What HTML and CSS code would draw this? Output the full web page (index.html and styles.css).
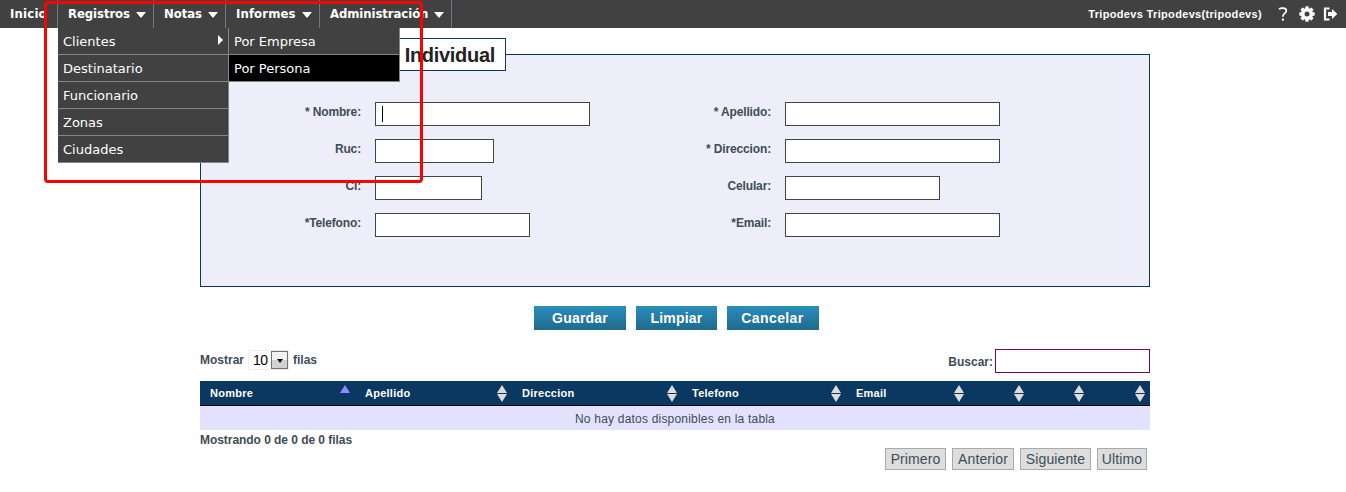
FILE: index.html
```html
<!DOCTYPE html>
<html lang="es">
<head>
<meta charset="utf-8">
<title>Registro de clientes</title>
<link rel="stylesheet" href="styles.css">
</head>
<body>
<header class="topbar">
  <nav class="menu">
    <div class="menu-item inicio"><span>Inicio</span></div>
    <div class="menu-item registros"><span>Registros</span><i class="down"></i>
      <div class="submenu">
        <div class="entry"><span>Clientes</span><i class="right"></i></div>
        <div class="entry">Destinatario</div>
        <div class="entry">Funcionario</div>
        <div class="entry">Zonas</div>
        <div class="entry">Ciudades</div>
      </div>
      <div class="submenu second">
        <div class="entry">Por Empresa</div>
        <div class="entry active">Por Persona</div>
      </div>
    </div>
    <div class="menu-item notas"><span>Notas</span><i class="down"></i></div>
    <div class="menu-item informes"><span>Informes</span><i class="down"></i></div>
    <div class="menu-item admin"><span>Administración</span><i class="down"></i></div>
  </nav>
  <div class="user">
    <span class="user-name">Tripodevs Tripodevs(tripodevs)</span>
    <svg class="icon help" width="12" height="16" viewBox="0 0 12 16"><path d="M2 3.200C3.300 2 9.300 1.200 9.300 4.700C9.300 7.600 5.800 7.200 5.800 10.800" fill="none" stroke="#fff" stroke-width="1.700"/><rect x="4.900" y="12.500" width="2" height="2.200" fill="#fff"/></svg>
    <svg class="icon gear" width="16" height="16" viewBox="0 0 16 16"><g fill="#fff"><rect x="6.300" y="0.300" width="3.400" height="15.400" rx=".6"/><rect x="6.300" y="0.300" width="3.400" height="15.400" rx=".6" transform="rotate(45 8 8)"/><rect x="6.300" y="0.300" width="3.400" height="15.400" rx=".6" transform="rotate(90 8 8)"/><rect x="6.300" y="0.300" width="3.400" height="15.400" rx=".6" transform="rotate(135 8 8)"/><circle cx="8" cy="8" r="6"/></g><circle cx="8" cy="8" r="2.500" fill="#414141"/></svg>
    <svg class="icon exit" width="15" height="14" viewBox="0 0 15 14"><path d="M6.500 1.500H2V12.500H6.500" fill="none" stroke="#fff" stroke-width="2.200"/><path d="M5 5H9V2L14.300 7L9 12V9H5Z" fill="#fff"/></svg>
  </div>
</header>
<div class="mark"></div>
<main class="page">
  <section class="panel">
    <h1 class="legend">Cliente Individual</h1>
    <div class="form">
      <label>* Nombre:</label><div class="field w215"><i class="caret"></i></div>
      <label>* Apellido:</label><div class="field w215"></div>
      <label>Ruc:</label><div class="field w119"></div>
      <label>* Direccion:</label><div class="field w215"></div>
      <label>Ci:</label><div class="field w107"></div>
      <label>Celular:</label><div class="field w155"></div>
      <label>*Telefono:</label><div class="field w155"></div>
      <label>*Email:</label><div class="field w215"></div>
    </div>
  </section>
  <div class="buttons">
    <button class="btn guardar">Guardar</button>
    <button class="btn limpiar">Limpiar</button>
    <button class="btn cancelar">Cancelar</button>
  </div>
  <div class="tools">
    <div class="length"><span>Mostrar</span><div class="select"><span>10</span><i class="drop"></i></div><span>filas</span></div>
    <div class="search"><span>Buscar:</span><div class="search-field"></div></div>
  </div>
  <div class="grid-head">
    <div class="th"><span>Nombre</span><i class="sort asc"></i></div>
    <div class="th"><span>Apellido</span><i class="sort"></i></div>
    <div class="th"><span>Direccion</span><i class="sort"></i></div>
    <div class="th"><span>Telefono</span><i class="sort"></i></div>
    <div class="th"><span>Email</span><i class="sort"></i></div>
    <div class="th"><i class="sort"></i></div>
    <div class="th"><i class="sort"></i></div>
    <div class="th"><i class="sort"></i></div>
  </div>
  <div class="empty"><span>No hay datos disponibles en la tabla</span></div>
  <div class="info"><span>Mostrando 0 de 0 de 0 filas</span></div>
  <div class="pager">
    <span class="pg p1">Primero</span><span class="pg p2">Anterior</span><span class="pg p3">Siguiente</span><span class="pg p4">Ultimo</span>
  </div>
</main>
</body>
</html>
```
FILE: styles.css
```css
* { box-sizing: border-box; }
body { margin: 0; height: 492px; overflow: hidden; background: #fff; font: 12px/14px "Liberation Sans", Arial, sans-serif; color: #3f4c56; }
.topbar { height: 28px; background: #414141; color: #fff; display: flex; justify-content: space-between; }
.menu { display: flex; font: bold 13px/27px "DejaVu Sans Condensed", "DejaVu Sans", sans-serif; letter-spacing: -.08px; }
.menu-item { position: relative; height: 28px; padding: 0 7px 0 10px; border-right: 1px solid #777484; display: flex; justify-content: space-between; align-items: flex-start; white-space: nowrap; }
.inicio { width: 58px; letter-spacing: .2px; }
.registros { width: 96px; }
.notas { width: 72px; }
.informes { width: 94px; letter-spacing: .12px; }
.admin { width: 132px; }
.down { border: 5px solid transparent; border-top: 6px solid #fff; border-bottom: 0; margin-top: 12px; }
.submenu { position: absolute; z-index: 5; left: 0; top: 28px; width: 171px; font: 13px/28px "DejaVu Sans", sans-serif; letter-spacing: 0; }
.submenu.second { left: 171px; }
.entry { height: 27px; padding: 0 5px; background: #414141; border-right: 1px solid #858585; border-bottom: 1px solid #858585; display: flex; justify-content: space-between; align-items: flex-start; }
.entry.active { background: #000; }
.right { border: 5px solid transparent; border-left: 5px solid #fff; border-right: 0; margin-top: 7px; }
.user { display: flex; align-items: center; height: 27px; padding-right: 8px; }
.user-name { font-weight: bold; font-size: 11px; letter-spacing: .33px; margin-right: 15px; }
.gear { margin: 0 8px 0 10px; }
.icon { display: block; }
.mark { position: absolute; z-index: 10; left: 44px; top: 1px; width: 379px; height: 182px; border: 3px solid #f00; border-radius: 4px; }
.page { width: 950px; margin-left: 200px; }
.panel { position: relative; height: 233px; margin-top: 26px; border: 1px solid #0b3861; background: #eeeefb; padding-top: 47px; }
.legend { position: absolute; right: 643px; top: -17px; height: 33px; margin: 0; padding: 0 10px; background: #fff; border: 1px solid #0b3861; color: #222; font-size: 20px; line-height: 32px; letter-spacing: -.3px; white-space: nowrap; }
.form { display: grid; grid-template-columns: 160px 250px 160px 215px; grid-auto-rows: 24px; row-gap: 13px; }
.form > :nth-child(4n + 2), .form > :nth-child(4n) { margin-left: 14px; }
label { text-align: right; font-weight: bold; line-height: 20px; letter-spacing: -.15px; }
.field { height: 24px; background: #fff; border: 1px solid #444; }
.w215 { width: 215px; }
.w119 { width: 119px; }
.w107 { width: 107px; }
.w155 { width: 155px; }
.caret { display: block; width: 1px; height: 16px; margin: 3px 0 0 6px; background: #000; }
.buttons { display: flex; gap: 10px; margin: 19px 0 0 334px; }
.btn { height: 24px; padding: 0; border: 0; background: linear-gradient(#2a8dbd, #1f6a8c); color: #fff; font: bold 14px/24px "Liberation Sans", Arial, sans-serif; letter-spacing: .2px; }
.guardar, .cancelar { width: 92px; }
.cancelar { padding-right: 1px; letter-spacing: .4px; }
.limpiar { width: 81px; }
.tools { display: flex; justify-content: space-between; margin-top: 19px; height: 32px; font-weight: bold; }
.length { display: flex; align-items: center; height: 21px; gap: 4px; }
.select { display: flex; align-items: center; justify-content: space-between; width: 41px; height: 20px; padding-left: 4px; border: 1px solid #eee; color: #000; font-weight: normal; font-size: 14px; letter-spacing: -.5px; }
.drop { display: flex; justify-content: center; width: 17px; height: 18px; border: 1px solid #707070; background: linear-gradient(#f2f2f2 50%, #d2d2d2 50%); }
.drop::after { content: ""; align-self: flex-start; border: 3.500px solid transparent; border-top: 4px solid #000; border-bottom: 0; margin-top: 7px; }
.search { display: flex; gap: 2px; line-height: 26px; }
.search-field { width: 155px; height: 24px; border: 1px solid #7d0552; background: #fff; }
.grid-head { display: grid; grid-template-columns: 155px 157px 170px 164px 123px 60px 60px 61px; height: 25px; background: #0b3861; border-bottom: 1px solid #000; color: #fff; font: bold 11px/24px "Liberation Sans", Arial, sans-serif; letter-spacing: .25px; }
.th { display: flex; justify-content: space-between; padding: 0 5px 0 10px; }
.th .sort { margin-left: auto; }
.sort { width: 10px; margin-top: 4px; }
.sort::before, .sort::after { content: ""; display: block; border: 5px solid transparent; border-bottom: 8px solid #dcdcdc; border-top: 0; }
.sort::after { border-top: 8px solid #dcdcdc; border-bottom: 0; margin-top: 1px; }
.asc::before { border-bottom-color: #8d8dff; }
.asc::after { display: none; }
.empty { height: 24px; background: #e2e2ff; text-align: center; line-height: 26px; letter-spacing: .2px; }
.info { height: 18px; line-height: 20px; font-weight: bold; letter-spacing: -.05px; }
.pager { display: flex; justify-content: flex-end; gap: 6px; padding-right: 3px; font-size: 14px; }
.pg { height: 22px; border: 1px solid #aaa; background: #ddd; line-height: 21px; text-align: center; letter-spacing: .1px; }
.p1 { width: 61px; }
.p2 { width: 62px; }
.p3 { width: 71px; }
.p4 { width: 50px; }
```
